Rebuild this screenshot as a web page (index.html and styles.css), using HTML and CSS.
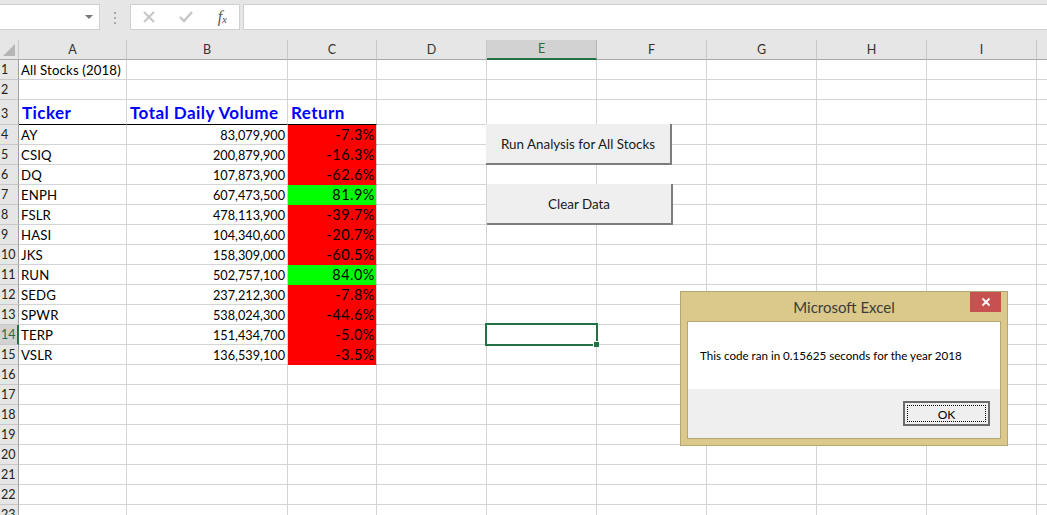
FILE: index.html
```html
<!DOCTYPE html>
<html lang="en">
<head>
<meta charset="utf-8">
<title>All Stocks (2018)</title>
<link rel="stylesheet" href="styles.css">
</head>
<body>
<div class="app">
  <div class="formula-bar">
    <div class="name-box"><span class="caret"></span></div>
    <div class="grip"><i></i><i></i><i></i></div>
    <div class="fx-box">
      <svg class="fx-icon" width="12" height="12" viewBox="0 0 12 12"><path d="M1 1l10 10M11 1L1 11" stroke="#c6c6c6" stroke-width="2" fill="none"/></svg>
      <svg class="fx-icon" width="14" height="12" viewBox="0 0 14 12"><path d="M1 6l4 4 8-9" stroke="#c6c6c6" stroke-width="2.4" fill="none"/></svg>
      <span class="fx">f<sub>x</sub></span>
    </div>
    <div class="formula-input"></div>
  </div>
  <table class="sheet">
    <colgroup>
      <col class="c-gut"><col class="c-a"><col class="c-b"><col class="c-c"><col class="c-std"><col class="c-std"><col class="c-std"><col class="c-std"><col class="c-std"><col class="c-std"><col class="c-j">
    </colgroup>
    <thead>
      <tr class="hdr"><th class="corner"><span class="tri"></span></th><th>A</th><th>B</th><th>C</th><th>D</th><th class="sel-col">E</th><th>F</th><th>G</th><th>H</th><th>I</th><th></th></tr>
    </thead>
    <tbody>
      <tr><th>1</th><td>All Stocks (2018)</td><td></td><td></td><td></td><td></td><td></td><td></td><td></td><td></td><td></td></tr>
      <tr><th>2</th><td></td><td></td><td></td><td></td><td></td><td></td><td></td><td></td><td></td><td></td></tr>
      <tr class="r3"><th>3</th><td class="head">Ticker</td><td class="head">Total Daily Volume</td><td class="head">Return</td><td></td><td></td><td></td><td></td><td></td><td></td><td></td></tr>
      <tr><th>4</th><td>AY</td><td class="num">83,079,900</td><td class="num neg">-7.3%</td><td></td><td></td><td></td><td></td><td></td><td></td><td></td></tr>
      <tr><th>5</th><td>CSIQ</td><td class="num">200,879,900</td><td class="num neg">-16.3%</td><td></td><td></td><td></td><td></td><td></td><td></td><td></td></tr>
      <tr><th>6</th><td>DQ</td><td class="num">107,873,900</td><td class="num neg">-62.6%</td><td></td><td></td><td></td><td></td><td></td><td></td><td></td></tr>
      <tr><th>7</th><td>ENPH</td><td class="num">607,473,500</td><td class="num pos">81.9%</td><td></td><td></td><td></td><td></td><td></td><td></td><td></td></tr>
      <tr><th>8</th><td>FSLR</td><td class="num">478,113,900</td><td class="num neg">-39.7%</td><td></td><td></td><td></td><td></td><td></td><td></td><td></td></tr>
      <tr><th>9</th><td>HASI</td><td class="num">104,340,600</td><td class="num neg">-20.7%</td><td></td><td></td><td></td><td></td><td></td><td></td><td></td></tr>
      <tr><th>10</th><td>JKS</td><td class="num">158,309,000</td><td class="num neg">-60.5%</td><td></td><td></td><td></td><td></td><td></td><td></td><td></td></tr>
      <tr><th>11</th><td>RUN</td><td class="num">502,757,100</td><td class="num pos">84.0%</td><td></td><td></td><td></td><td></td><td></td><td></td><td></td></tr>
      <tr><th>12</th><td>SEDG</td><td class="num">237,212,300</td><td class="num neg">-7.8%</td><td></td><td></td><td></td><td></td><td></td><td></td><td></td></tr>
      <tr><th>13</th><td>SPWR</td><td class="num">538,024,300</td><td class="num neg">-44.6%</td><td></td><td></td><td></td><td></td><td></td><td></td><td></td></tr>
      <tr><th class="sel-row">14</th><td>TERP</td><td class="num">151,434,700</td><td class="num neg">-5.0%</td><td></td><td></td><td></td><td></td><td></td><td></td><td></td></tr>
      <tr><th>15</th><td>VSLR</td><td class="num">136,539,100</td><td class="num neg">-3.5%</td><td></td><td></td><td></td><td></td><td></td><td></td><td></td></tr>
      <tr><th>16</th><td></td><td></td><td></td><td></td><td></td><td></td><td></td><td></td><td></td><td></td></tr>
      <tr><th>17</th><td></td><td></td><td></td><td></td><td></td><td></td><td></td><td></td><td></td><td></td></tr>
      <tr><th>18</th><td></td><td></td><td></td><td></td><td></td><td></td><td></td><td></td><td></td><td></td></tr>
      <tr><th>19</th><td></td><td></td><td></td><td></td><td></td><td></td><td></td><td></td><td></td><td></td></tr>
      <tr><th>20</th><td></td><td></td><td></td><td></td><td></td><td></td><td></td><td></td><td></td><td></td></tr>
      <tr><th>21</th><td></td><td></td><td></td><td></td><td></td><td></td><td></td><td></td><td></td><td></td></tr>
      <tr><th>22</th><td></td><td></td><td></td><td></td><td></td><td></td><td></td><td></td><td></td><td></td></tr>
      <tr><th>23</th><td></td><td></td><td></td><td></td><td></td><td></td><td></td><td></td><td></td><td></td></tr>
    </tbody>
  </table>

  <button class="sheet-btn run-btn" type="button">Run Analysis for All Stocks</button>
  <button class="sheet-btn clear-btn" type="button">Clear Data</button>
  <div class="active-cell"><span class="handle"></span></div>

  <div class="dialog">
    <div class="dialog-title">Microsoft Excel</div>
    <div class="dialog-close">
      <svg width="10" height="10" viewBox="0 0 10 10"><path d="M1.5 1.5l7 7M8.500 1.5l-7 7" stroke="#fff" stroke-width="1.800" fill="none"/></svg>
    </div>
    <div class="dialog-body">
      <p class="dialog-msg">This code ran in 0.15625 seconds for the year 2018</p>
      <div class="dialog-foot"><button class="ok-btn" type="button"><span>OK</span></button></div>
    </div>
  </div>
</div>
</body>
</html>
```

FILE: styles.css
```css
* { box-sizing: border-box; }
html, body { margin: 0; padding: 0; height: 100%; overflow: hidden; background: #fff; }
.app {
  position: relative;
  width: 1047px;
  height: 515px;
  overflow: hidden;
  font-family: Lato, "Liberation Sans", sans-serif;
  font-size: 13px;
  color: #000;
}

/* formula bar */
.formula-bar {
  display: flex;
  align-items: flex-start;
  height: 40px;
  padding-top: 4px;
  background: #e6e6e6;
}
.name-box {
  position: relative;
  width: 100px;
  height: 26px;
  background: #fff;
  border: 1px solid #d0d0d0;
  border-left: 0;
}
.caret {
  position: absolute;
  right: 6px;
  top: 10px;
  border-left: 4px solid transparent;
  border-right: 4px solid transparent;
  border-top: 4px solid #777;
}
.grip {
  display: flex;
  flex-direction: column;
  gap: 3px;
  width: 30px;
  padding: 8px 0 0 14px;
}
.grip i { width: 2px; height: 2px; background: #a8a8a8; }
.fx-box {
  display: flex;
  align-items: center;
  justify-content: space-between;
  width: 110px;
  height: 26px;
  padding: 0 12px;
  background: #fff;
  border: 1px solid #d0d0d0;
}
.fx {
  font-family: "Liberation Serif", serif;
  font-style: italic;
  font-size: 16px;
  color: #555;
  line-height: 1;
}
.fx sub { font-size: 11px; vertical-align: -1px; line-height: 0; }
.formula-input {
  flex: 1;
  height: 26px;
  margin-left: 3px;
  background: #fff;
  border: 1px solid #d0d0d0;
  border-right: 0;
}

/* grid */
.sheet {
  table-layout: fixed;
  width: 1058px;
  border-collapse: separate;
  border-spacing: 0;
}
.c-gut { width: 19px; }
.c-a { width: 108px; }
.c-b { width: 161px; }
.c-c { width: 89px; }
.c-std { width: 110px; }
.c-j { width: 21px; }
.sheet tr { height: 20px; }
.sheet tr.r3 { height: 25px; }
.sheet th, .sheet td {
  padding: 0;
  height: inherit;
  border-right: 1px solid #d4d4d4;
  border-bottom: 1px solid #d4d4d4;
  font-weight: 400;
  line-height: 18px;
  overflow: hidden;
  white-space: nowrap;
}
.sheet td { padding: 0 2px; font-size: 13.200px; letter-spacing: 0.15px; }
.sheet th {
  background: #e6e6e6;
  border-right-color: #9f9f9f;
  border-bottom-color: #c8c8c8;
  text-align: left;
  color: #222;
  font-size: 13px;
}
.sheet thead th {
  text-align: center;
  color: #333;
  border-right-color: #c8c8c8;
  border-bottom-color: #a8a8a8;
  font-size: 12.500px;
}
.sheet tbody th { padding-left: 1px; font-size: 12.500px; }
.sheet tbody .r3 th { vertical-align: bottom; padding-bottom: 1px; }
.sheet .corner { position: relative; }
.tri {
  position: absolute;
  right: 3px;
  bottom: 3px;
  border-left: 12px solid transparent;
  border-bottom: 12px solid #b5b5b5;
}
.sheet thead th.sel-col {
  background: #d2d2d2;
  color: #1f6e43;
  border-bottom: 2px solid #217346;
  border-right-color: #b5b5b5;
}
.sheet tbody th.sel-row {
  background: #d2d2d2;
  color: #1f6e43;
  border-right: 2px solid #217346;
}
.sheet .r3 .head {
  font-size: 17px;
  font-weight: 700;
  letter-spacing: 0.45px;
  color: #0000ff;
  vertical-align: bottom;
  padding: 0 0 2px 3px;
  overflow: visible;
}
.r3 td:nth-child(2), .r3 td:nth-child(3), .r3 td:nth-child(4) { border-bottom-color: #000; }
.sheet .num { text-align: right; font-size: 12.700px; letter-spacing: 0; }
.sheet .neg, .sheet .pos { font-size: 14.500px; letter-spacing: 0.5px; padding-right: 1px; }
.neg { background: #ff0000; color: #000; border-bottom-color: #ff0000 !important; }
.pos { background: #00ff00; color: #000; border-bottom-color: #00ff00 !important; }

/* worksheet overlays */
.sheet-btn {
  position: absolute;
  height: 41px;
  padding: 0;
  font: inherit;
  font-size: 13.400px;
  color: #1a1a1a;
  background: #efefef;
  border: 0;
  border-right: 2px solid #7d7d7d;
  border-bottom: 2px solid #7d7d7d;
}
.run-btn { left: 486px; top: 124px; width: 186px; }
.clear-btn { left: 487px; top: 184px; width: 186px; }
.active-cell {
  position: absolute;
  left: 485px;
  top: 323px;
  width: 113px;
  height: 23px;
  border: 2px solid #217346;
}
.handle {
  position: absolute;
  right: -3px;
  bottom: -3px;
  width: 6px;
  height: 6px;
  background: #217346;
  border-top: 1px solid #fff;
  border-left: 1px solid #fff;
}

/* message box */
.dialog {
  position: absolute;
  left: 680px;
  top: 291px;
  width: 328px;
  height: 155px;
  padding: 0 6px 6px;
  display: flex;
  flex-direction: column;
  background: #dac98a;
  border: 1px solid #b3a677;
}
.dialog-title {
  height: 29px;
  flex: none;
  font-size: 15px;
  line-height: 30px;
  text-align: center;
  color: #3c3c3c;
}
.dialog-close {
  position: absolute;
  right: 6px;
  top: 0;
  width: 31px;
  height: 20px;
  display: flex;
  align-items: center;
  justify-content: center;
  background: #c75050;
}
.dialog-body {
  flex: 1;
  display: flex;
  flex-direction: column;
  border: 1px solid #b3a677;
  background: #fff;
}
.dialog-msg {
  flex: 1;
  margin: 0;
  padding: 25px 12px 0;
  font-size: 11.600px;
  line-height: 18px;
  color: #000;
}
.dialog-foot {
  flex: none;
  height: 49px;
  padding: 12px 10px 0 0;
  display: flex;
  justify-content: flex-end;
  align-items: flex-start;
  background: #efefef;
}
.ok-btn {
  width: 87px;
  height: 25px;
  padding: 2px;
  font: inherit;
  font-size: 12px;
  background: #efefef;
  border: 2px solid #6b6b6b;
}
.ok-btn span {
  display: block;
  height: 100%;
  line-height: 17px;
  border: 1px dotted #000;
}
```
